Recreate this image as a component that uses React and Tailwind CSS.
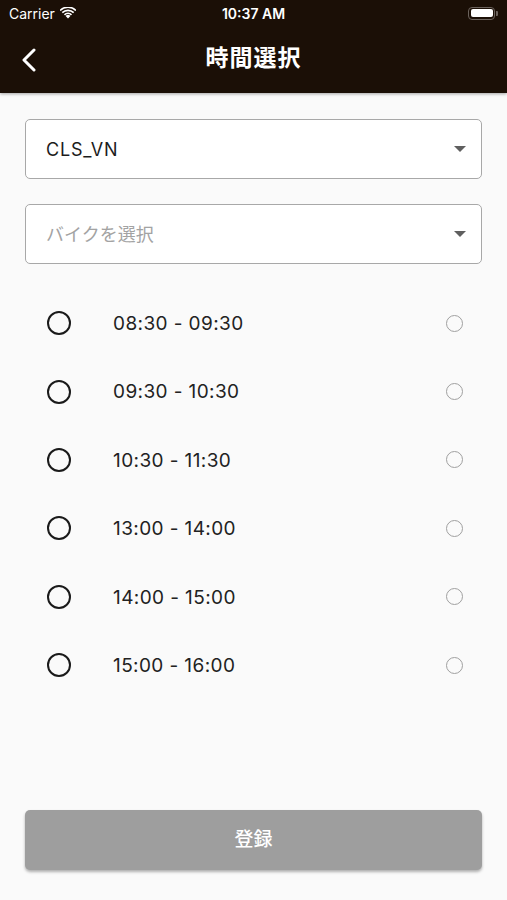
import { useState } from 'react'

const SLOTS = ['08:30 - 09:30', '09:30 - 10:30', '10:30 - 11:30', '13:00 - 14:00', '14:00 - 15:00', '15:00 - 16:00']

const JP = { fontFamily: 'Inter, "Noto Sans CJK JP", sans-serif' }
const TITLE = { fontFamily: 'Roboto, "Noto Sans CJK JP", sans-serif' }

function StatusBar() {
  return (
    <div className="relative flex h-[26px] items-center justify-between px-[9px] text-white">
      <div className="flex items-center gap-[5px] text-[14px]" style={{ fontFamily: 'Inter, sans-serif' }}>
        <span>Carrier</span>
        <svg width="16" height="12" viewBox="0 0 16 12" fill="white">
          <path d="M8 11.5 10.4 9a3.4 3.4 0 0 0-4.8 0Z" />
          <path d="M3.9 7.3 5.1 8.5a4.1 4.1 0 0 1 5.8 0l1.2-1.2a5.8 5.8 0 0 0-8.2 0Z" />
          <path d="M1.7 5.1 2.9 6.3a7.2 7.2 0 0 1 10.2 0l1.2-1.2a8.9 8.9 0 0 0-12.6 0Z" />
          <path d="M-.5 2.9.7 4.1a10.3 10.3 0 0 1 14.6 0l1.2-1.2a12 12 0 0 0-17 0Z" />
        </svg>
      </div>
      <span className="absolute left-1/2 -translate-x-1/2 text-[14px] font-semibold" style={{ fontFamily: 'Inter, sans-serif' }}>10:37 AM</span>
      <div className="flex items-center">
        <div className="h-[13px] w-[27px] rounded-[4px] border-[1.5px] border-[#6b625c] p-[1.5px]">
          <div className="h-full w-full rounded-[2px] bg-white" />
        </div>
        <div className="ml-[1px] h-[5px] w-[2px] rounded-r-[1px] bg-[#6b625c]" />
      </div>
    </div>
  )
}

function Dropdown({ value, placeholder }) {
  return (
    <div className="flex h-[60px] items-center justify-between rounded-[5px] border border-[#a8a8a8] bg-white pl-[20px] pr-[15px]">
      <span className={`text-[18px] ${value ? 'tracking-[0.8px] text-[#1c1c1c]' : 'text-[#a3a3a3]'}`} style={JP}>
        {value || placeholder}
      </span>
      <svg width="12" height="6" viewBox="0 0 12 6">
        <path d="M0 0h12L6 6Z" fill="#5f5f5f" />
      </svg>
    </div>
  )
}

export default function App() {
  const [selected, setSelected] = useState(null)

  return (
    <div className="flex h-[900px] w-[507px] flex-col bg-[#fafafa]">
      <div className="bg-[#1b0f06] shadow-[0_1px_3px_rgba(0,0,0,0.35)]">
        <StatusBar />
        <div className="relative flex h-[67px] items-center justify-center">
          <button className="absolute left-[19px] top-1/2 -translate-y-1/2 p-[2px]">
            <svg width="16" height="24" viewBox="0 0 16 24" fill="none">
              <path d="M13 2 3 12l10 10" stroke="white" strokeWidth="3" strokeLinecap="round" strokeLinejoin="round" />
            </svg>
          </button>
          <h1 className="text-[23px] font-bold tracking-[1px] text-white" style={TITLE}>時間選択</h1>
        </div>
      </div>

      <div className="flex flex-1 flex-col px-[25px]">
        <div className="mt-[26px] flex flex-col gap-[25px]">
          <Dropdown value="CLS_VN" />
          <Dropdown placeholder="バイクを選択" />
        </div>

        <div className="mt-[25px] flex flex-col">
          {SLOTS.map((s, i) => (
            <div key={s} onClick={() => setSelected(i)} className="flex h-[68.4px] items-center pl-[22px] pr-[19px]">
              <div className="flex h-[24px] w-[24px] items-center justify-center rounded-full border-[2.5px] border-[#1a1a1a]">
                {selected === i && <div className="h-[12px] w-[12px] rounded-full bg-[#1a1a1a]" />}
              </div>
              <span className="ml-[42px] mt-[2px] flex-1 text-[19px] tracking-[0.4px] text-[#222]" style={JP}>{s}</span>
              <div className="h-[17px] w-[17px] rounded-full border-[1.5px] border-[#a0a0a0]" />
            </div>
          ))}
        </div>

        <button className="mb-[30px] mt-auto h-[60px] rounded-[5px] bg-[#9e9e9e] text-[19px] font-medium text-white shadow-[0_2px_3px_rgba(0,0,0,0.3)]" style={TITLE}>
          登録
        </button>
      </div>
    </div>
  )
}
